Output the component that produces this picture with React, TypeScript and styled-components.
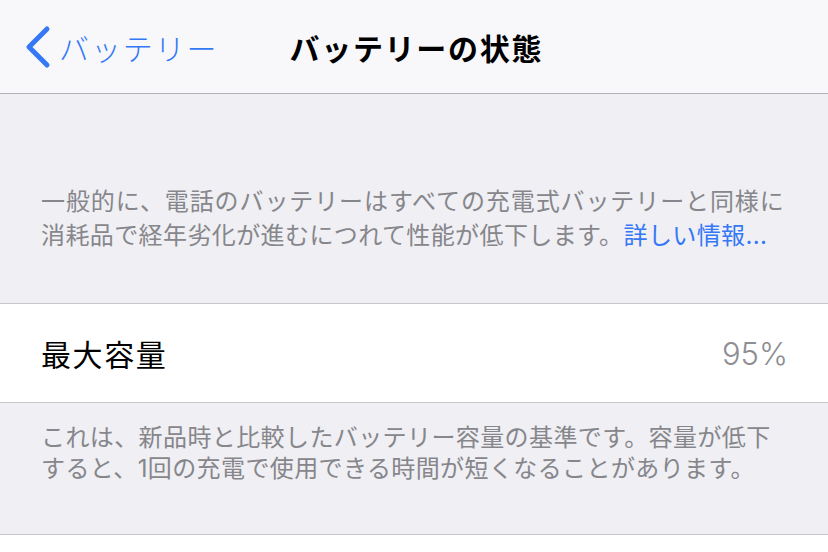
import styled, { createGlobalStyle } from 'styled-components'

const GlobalStyle = createGlobalStyle`
  html, body {
    margin: 0;
    padding: 0;
    background: #ffffff;
  }
  body {
    font-family: Inter, "Noto Sans CJK JP", sans-serif;
    -webkit-font-smoothing: antialiased;
  }
`

const colors = {
  blue: '#3478f6',
  groupBg: '#efeff4',
  navBg: '#f8f8fa',
  separator: '#c8c7cc',
  footerText: '#86868b',
  valueText: '#8e8e93',
}

const Screen = styled.div`
  width: 828px;
  height: 552px;
  overflow: hidden;
  display: flex;
  flex-direction: column;
  background: #ffffff;
`

const NavBar = styled.header`
  height: 93px;
  flex-shrink: 0;
  display: flex;
  align-items: center;
  padding: 0 0 0 24px;
  background: ${colors.navBg};
  border-bottom: 1px solid #b2b2b6;
`

const BackButton = styled.div`
  display: flex;
  align-items: center;
  gap: 7px;
  color: ${colors.blue};
  font-size: 30px;
  letter-spacing: 1.9px;
  font-weight: 300;
`

const NavTitle = styled.h1`
  margin: 0 0 0 71px;
  font-size: 30px;
  font-weight: 700;
  letter-spacing: 1.7px;
  color: #000000;
`

const Section = styled.section<{ $top: number; $bottom: number }>`
  background: ${colors.groupBg};
  padding: ${(p) => p.$top}px 40px ${(p) => p.$bottom}px 41px;
  border-bottom: 1px solid ${colors.separator};
`

const FooterText = styled.p<{ $lineHeight: number; $spacing: number }>`
  margin: 0;
  font-size: 24px;
  letter-spacing: ${(p) => p.$spacing}px;
  line-height: ${(p) => p.$lineHeight}px;
  color: ${colors.footerText};
`

// the wrapped tail of a footer sets a little tighter, as in the reference
const Tight = styled.span`
  letter-spacing: 0.4px;
`

const Link = styled.span`
  color: ${colors.blue};
  letter-spacing: 0.4px;
`

const Row = styled.div`
  height: 98px;
  display: flex;
  align-items: center;
  justify-content: space-between;
  padding: 0 40px 0 41px;
  background: #ffffff;
  border-bottom: 1px solid ${colors.separator};
`

const RowLabel = styled.span`
  font-size: 30px;
  letter-spacing: 1.6px;
  color: #000000;
`

const RowValue = styled.span`
  font-size: 31px;
  font-weight: 300;
  color: ${colors.valueText};
`

const Chevron = () => (
  <svg width="28" height="44" viewBox="0 0 28 44">
    <path
      d="M23 4 L5 22 L23 40"
      fill="none"
      stroke={colors.blue}
      strokeWidth="5"
      strokeLinecap="round"
      strokeLinejoin="round"
    />
  </svg>
)

export default function App() {
  return (
    <>
      <GlobalStyle />
      <Screen>
        <NavBar>
          <BackButton>
            <Chevron />
            バッテリー
          </BackButton>
          <NavTitle>バッテリーの状態</NavTitle>
        </NavBar>

        <Section $top={91} $bottom={50}>
          <FooterText $lineHeight={34} $spacing={0.9}>
            {'一般的に、電話のバッテリーはすべての充電式バッテリーと同様に'}
            <Tight>消耗品で経年劣化が進むにつれて性能が低下します。</Tight>
            <Link>詳しい情報...</Link>
          </FooterText>
        </Section>

        <Row>
          <RowLabel>最大容量</RowLabel>
          <RowValue>95%</RowValue>
        </Row>

        <Section $top={19} $bottom={50}>
          <FooterText $lineHeight={31} $spacing={0.4}>
            これは、新品時と比較したバッテリー容量の基準です。容量が低下すると、1回の充電で使用できる時間が短くなることがあります。
          </FooterText>
        </Section>
      </Screen>
    </>
  )
}
